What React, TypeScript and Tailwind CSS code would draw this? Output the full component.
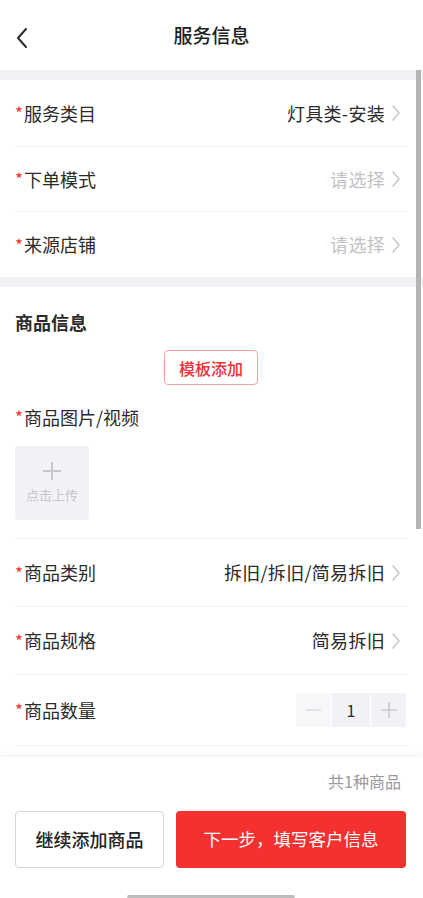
const FONT = { fontFamily: '"Noto Sans CJK SC", "Noto Sans", sans-serif' }

function Chevron() {
  return (
    <svg width="10" height="18" viewBox="0 0 10 18" className="ml-[6px] shrink-0">
      <path d="M2 2l6 7-6 7" fill="none" stroke="#c4c4c8" strokeWidth="1.4" strokeLinecap="round" strokeLinejoin="round" />
    </svg>
  )
}

function Label({ text }: { text: string }) {
  return (
    <span className="flex items-center text-[18px] text-[#2b2b2b]">
      <span className="mr-[1px] text-[17px] text-[#f33131]">*</span>
      {text}
    </span>
  )
}

function SelectRow({
  label,
  value,
  height = 'h-[65px]',
  border = true,
}: {
  label: string
  value?: string
  height?: string
  border?: boolean
}) {
  return (
    <div className={`flex items-center justify-between ${height} ${border ? 'border-b border-[#f0f0f3]' : ''}`}>
      <Label text={label} />
      <div className="flex items-center pr-[6px]">
        <span className={`text-[18px] tracking-[0.3px] ${value ? 'text-[#2b2b2b]' : 'text-[#c2c2c6]'}`}>{value ?? '请选择'}</span>
        <Chevron />
      </div>
    </div>
  )
}

export default function App() {
  return (
    <div style={FONT} className="relative flex h-[898px] w-full flex-col overflow-hidden bg-white">
      {/* header */}
      <header className="relative flex h-[70px] shrink-0 items-center justify-center bg-white">
        <svg width="14" height="22" viewBox="0 0 14 22" className="absolute left-[15px] top-[27px]">
          <path d="M11 2L3 11l8 9" fill="none" stroke="#2b2b2b" strokeWidth="2" strokeLinecap="round" strokeLinejoin="round" />
        </svg>
        <h1 className="text-[19px] font-medium text-[#222]">服务信息</h1>
      </header>

      {/* scroll area */}
      <main className="relative flex-1 overflow-hidden bg-[#f2f2f6] pt-[10px]">
        <section className="bg-white pl-[15px] pr-[16px]">
          <SelectRow label="服务类目" value="灯具类-安装" height="h-[67px]" />
          <SelectRow label="下单模式" />
          <SelectRow label="来源店铺" border={false} />
        </section>

        <section className="mt-[10px] bg-white pl-[15px] pr-[16px]">
          <h2 className="pt-[22px] text-[18px] font-bold leading-[26px] text-[#2b2b2b]">商品信息</h2>
          <div className="mt-[15px] flex justify-center">
            <button className="h-[35px] w-[94px] rounded-[4px] border border-[#f7a3a6] text-[16px] font-medium text-[#ee2f36]">
              模板添加
            </button>
          </div>
          <div className="mt-[19px] leading-[26px]">
            <Label text="商品图片/视频" />
          </div>
          <div className="mt-[16px] flex h-[74px] w-[74px] flex-col items-center justify-center rounded-[4px] bg-[#f2f2f6]">
            <svg width="20" height="20" viewBox="0 0 20 20">
              <path d="M10 1v18M1 10h18" stroke="#c6c6cb" strokeWidth="2" />
            </svg>
            <span className="mt-[4px] text-[13px] text-[#c6c6cb]">点击上传</span>
          </div>
          <div className="mt-[18px] border-b border-[#f0f0f3]" />
          <SelectRow label="商品类别" value="拆旧/拆旧/简易拆旧" height="h-[68px]" />
          <SelectRow label="商品规格" value="简易拆旧" height="h-[68px]" />
          <div className="flex h-[71px] items-center justify-between border-b border-[#f0f0f3]">
            <Label text="商品数量" />
            <div className="flex h-[34px] gap-[1px] pr-[1px]">
              <div className="flex w-[35px] items-center justify-center rounded-l-[3px] bg-[#f7f7f9]">
                <span className="h-[1.5px] w-[15px] bg-[#e2e2e6]" />
              </div>
              <div className="flex w-[38px] items-center justify-center bg-[#f2f2f6] text-[16px] text-[#2b2b2b]">1</div>
              <div className="flex w-[35px] items-center justify-center rounded-r-[3px] bg-[#f2f2f6]">
                <svg width="18" height="18" viewBox="0 0 18 18">
                  <path d="M9 1v16M1 9h16" stroke="#c6c6cb" strokeWidth="1.5" />
                </svg>
              </div>
            </div>
          </div>
          <div className="h-[20px]" />
        </section>

        {/* scrollbar */}
        <div className="absolute right-[2px] top-0 h-[459px] w-[5px] bg-[#b5b5b5]" />
      </main>

      {/* bottom bar */}
      <footer className="relative h-[141px] shrink-0 bg-white pl-[15px] pr-[17px] shadow-[0_-2px_5px_rgba(0,0,0,0.06)]">
        <div className="flex justify-end pr-[5px] pt-[12px] text-[16px] leading-[24px] text-[#9a9a9e]">共1种商品</div>
        <div className="mt-[18px] flex gap-[12px]">
          <button className="h-[57px] w-[149px] rounded-[4px] border border-[#d4d4da] text-[18px] font-medium text-[#222]">
            继续添加商品
          </button>
          <button className="h-[57px] flex-1 rounded-[4px] bg-[#f33131] text-[17.5px] text-white">
            下一步，填写客户信息
          </button>
        </div>
        <div className="flex h-[30px] items-end justify-center">
          <span className="h-[3px] w-[168px] rounded-full bg-[#bdbdbd]" />
        </div>
      </footer>
    </div>
  )
}
